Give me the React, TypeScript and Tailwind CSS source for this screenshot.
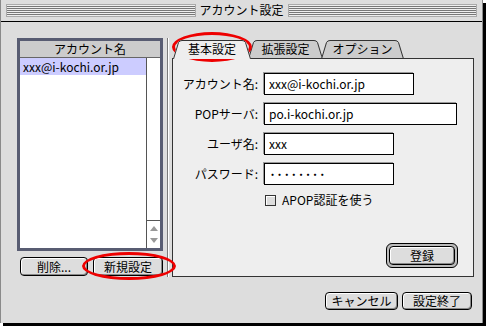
import type { ReactNode } from "react";

const jp = "font-['Noto_Sans_CJK_JP','Noto_Sans',sans-serif]";

function PushButton({ children, className = "" }: { children: ReactNode; className?: string }) {
  return (
    <div
      className={`flex items-center justify-center rounded-[4px] border border-black bg-[#dddddd] text-[12px] leading-none text-black shadow-[inset_1px_1px_0_#ffffff,inset_-1px_-1px_0_#888888] ${className}`}
    >
      {children}
    </div>
  );
}

function Tab({ label, w, active, className = "" }: { label: string; w: number; active?: boolean; className?: string }) {
  const fill = `0,19 5,2 8,0 ${w - 8},0 ${w - 5},2 ${w},19`;
  const edge = `M0.5,19 L5.5,2.5 Q6.5,0.5 9,0.5 L${w - 9},0.5 Q${w - 6.5},0.5 ${w - 5.5},2.5 L${w - 0.5},19`;
  return (
    <div className={`relative flex h-[19px] items-center justify-center pb-[1px] ${active ? "z-10" : ""} ${className}`}>
      <svg className="absolute left-0 top-0" width={w} height={19} viewBox={`0 0 ${w} 19`}>
        <polygon points={fill} fill={active ? "#eeeeee" : "#cccccc"} />
        <path d={edge} fill="none" stroke="#333333" strokeWidth={1} />
      </svg>
      <span className="relative text-[12px] leading-none">{label}</span>
    </div>
  );
}

function Field({ label, value, width }: { label: string; value: string; width: string }) {
  return (
    <div className="flex h-[22px] items-center">
      <div className="w-[85px] text-right text-[12px] leading-none">{label}</div>
      <div
        className={`ml-[6px] flex h-[22px] items-center border border-black bg-white pl-[4px] text-[12px] leading-none shadow-[-1px_-1px_0_#999999] ${width}`}
      >
        {value}
      </div>
    </div>
  );
}

export default function App() {
  return (
    <div className={`relative h-[326px] w-[486px] bg-white text-black ${jp}`}>
      <div className="flex h-[323px] w-[483px] flex-col border-l border-r border-[#8a8a8a] bg-[#dddddd] shadow-[3px_3px_0_#000000]">
        {/* title bar */}
        <div className="flex h-[22px] items-center border-b border-black px-[5px] pb-[1px]">
          <div className="h-[13px] flex-1 border border-[#aaaaaa] bg-[repeating-linear-gradient(to_bottom,#eeeeee_0px,#eeeeee_1px,#777777_1px,#777777_2px)]" />
          <div className="px-[4px] text-[12px] leading-none">アカウント設定</div>
          <div className="h-[13px] flex-1 border border-[#aaaaaa] bg-[repeating-linear-gradient(to_bottom,#eeeeee_0px,#eeeeee_1px,#777777_1px,#777777_2px)]" />
        </div>

        <div className="flex flex-1 pl-[16px] pt-[16px]">
          {/* account list */}
          <div className="flex w-[146px] flex-col">
            <div className="flex h-[213px] flex-col border-[3px] border-[#585c72] bg-white">
              <div className="flex h-[17px] items-center justify-center border-b border-[#666666] bg-[#cccccc] text-[12px] leading-none">
                アカウント名
              </div>
              <div className="flex flex-1">
                <div className="flex-1">
                  <div className="flex h-[17px] items-center bg-[#ccccff] pl-[3px] text-[12px] leading-none">
                    xxx@i-kochi.or.jp
                  </div>
                </div>
                <div className="flex w-[14px] flex-col border-l border-[#555555]">
                  <div className="flex-1" />
                  <div className="flex h-[28px] flex-col items-center justify-around border-t border-[#555555] py-[2px]">
                    <svg width="8" height="5" viewBox="0 0 8 5">
                      <polygon points="0,5 4,0 8,5" fill="#999999" />
                    </svg>
                    <svg width="8" height="5" viewBox="0 0 8 5">
                      <polygon points="0,0 8,0 4,5" fill="#999999" />
                    </svg>
                  </div>
                </div>
              </div>
            </div>
            <div className="mt-[6px] flex pl-[3px]">
              <PushButton className="h-[19px] w-[68px]">削除...</PushButton>
              <PushButton className="ml-[5px] h-[19px] w-[70px]">新規設定</PushButton>
            </div>
          </div>

          {/* separator */}
          <div className="flex h-[239px] w-[9px] pl-[4px]">
            <div className="w-[1px] bg-[#7a7a7a]" />
            <div className="w-[1px] bg-white" />
          </div>

          {/* settings */}
          <div className="flex flex-col pt-[2px]">
            <div className="-mb-[1px] flex pl-[1px]">
              <Tab label="基本設定" w={78} active className="w-[78px]" />
              <Tab label="拡張設定" w={75} className="-ml-[3px] w-[75px]" />
              <Tab label="オプション" w={83} className="-ml-[2px] w-[83px]" />
            </div>
            <div className="relative z-0 flex h-[219px] w-[302px] flex-col border border-[#333333] bg-[#eeeeee] pt-[14px]">
              <div className="flex flex-col gap-[8px]">
                <Field label="アカウント名:" value="xxx@i-kochi.or.jp" width="w-[150px]" />
                <Field label="POPサーバ:" value="po.i-kochi.or.jp" width="w-[193px]" />
                <Field label="ユーザ名:" value="xxx" width="w-[130px]" />
                <Field label="パスワード:" value="········" width="w-[130px] font-bold" />
              </div>
              <div className="ml-[92px] mt-[9px] flex items-center">
                <div className="h-[11px] w-[11px] border border-[#333333] bg-[#dddddd] shadow-[inset_1px_1px_0_#ffffff]" />
                <span className="ml-[6px] text-[12px] leading-none">APOP認証を使う</span>
              </div>
              <div className="mt-auto flex justify-end pb-[8px] pr-[15px]">
                <div className="flex h-[25px] w-[72px] items-center justify-center rounded-[6px] border border-black bg-[#bbbbbb] p-[2px]">
                  <PushButton className="h-full w-full">登録</PushButton>
                </div>
              </div>
            </div>
            <div className="mt-[15px] flex justify-end gap-[4px] pr-[2px]">
              <PushButton className="h-[18px] w-[73px]">キャンセル</PushButton>
              <PushButton className="h-[18px] w-[70px]">設定終了</PushButton>
            </div>
          </div>
        </div>
      </div>

      {/* red annotation circles */}
      <div className="absolute left-[172px] top-[32px] h-[30px] w-[80px] rounded-[50%] border-[3px] border-[#ee0000]" />
      <div className="absolute left-[82px] top-[252px] h-[28px] w-[94px] rounded-[50%] border-[3px] border-[#ee0000]" />
    </div>
  );
}
